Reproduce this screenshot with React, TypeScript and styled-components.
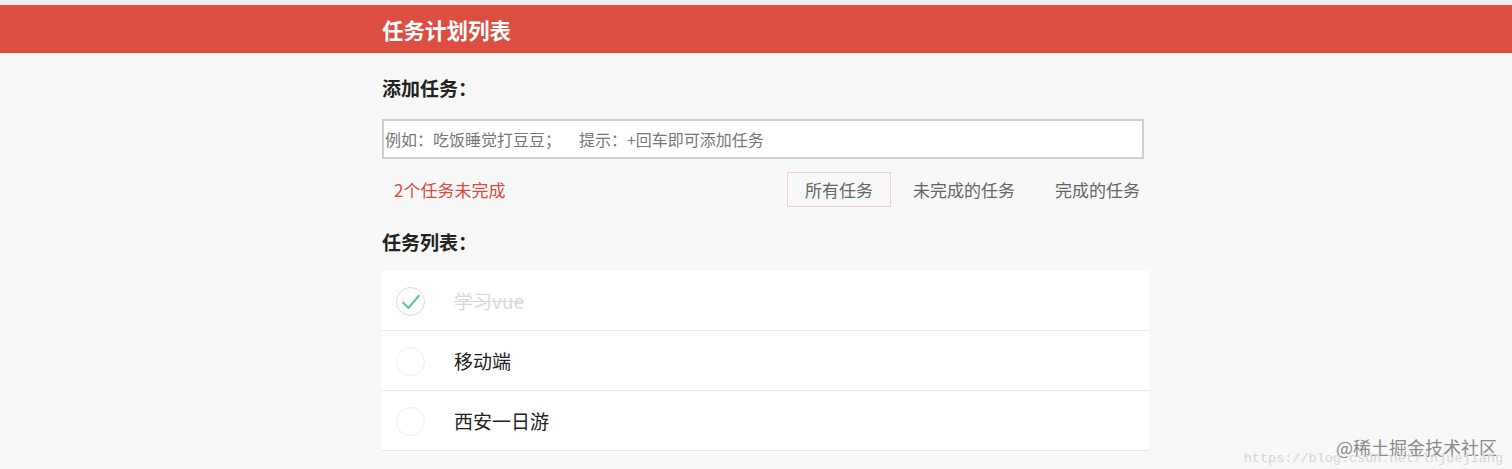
import styled, { createGlobalStyle } from "styled-components";

const GlobalStyle = createGlobalStyle`
  html, body {
    margin: 0;
    padding: 0;
    background: #f8f8f8;
  }
  body {
    font-family: "Noto Sans CJK SC", "Noto Sans", sans-serif;
  }
`;

const Page = styled.div`
  position: relative;
  height: 469px;
  overflow: hidden;
  border-top: 5px solid #eeeeee;
  background: #f8f8f8;
`;

const TopBar = styled.header`
  height: 48px;
  background: #dc4e41;
  display: flex;
  align-items: center;
  padding-left: 382px;

  h1 {
    margin: 0;
    font-size: 21.5px;
    font-weight: 700;
    color: #fff;
  }
`;

const Main = styled.main`
  width: 768px;
  margin-left: 382px;
  display: flex;
  flex-direction: column;
`;

const SectionTitle = styled.h2<{ $top: number }>`
  margin: ${(p) => p.$top}px 0 0 0;
  font-size: 19px;
  line-height: 24px;
  font-weight: 700;
  color: #222;
`;

const TaskInput = styled.input`
  box-sizing: border-box;
  width: 762px;
  height: 40px;
  margin-top: 19px;
  border: 2px solid #cfcfcf;
  background: #fff;
  padding: 0 1px;
  font-family: inherit;
  font-size: 16px;
  outline: none;

  &::placeholder {
    color: #777;
  }
`;

const FilterRow = styled.div`
  margin-top: 13px;
  height: 35px;
  display: flex;
  align-items: center;
  justify-content: space-between;
  margin-right: -8px;
`;

const Remaining = styled.span`
  padding-left: 12px;
  font-size: 17px;
  color: #d9493c;
`;

const Tabs = styled.div`
  display: flex;
  gap: 4px;
  height: 100%;
`;

const Tab = styled.button<{ $active?: boolean }>`
  height: 100%;
  box-sizing: border-box;
  padding: 0 17px;
  background: none;
  border: 1px solid ${(p) => (p.$active ? "#efd0d4" : "transparent")};
  font-family: inherit;
  font-size: 17px;
  color: #666;
  cursor: pointer;
`;

const List = styled.ul`
  list-style: none;
  margin: 17px 0 0 0;
  padding: 0;
  background: #fff;
`;

const Item = styled.li`
  height: 59px;
  display: flex;
  align-items: center;
  border-bottom: 1px solid #e8e8e8;
  padding-left: 14px;
`;

const Check = styled.span<{ $done?: boolean }>`
  width: 29px;
  height: 29px;
  box-sizing: border-box;
  border-radius: 50%;
  border: 1px solid ${(p) => (p.$done ? "#d5ddda" : "#ededed")};
  display: flex;
  align-items: center;
  justify-content: center;
  margin-top: 2px;
`;

const Label = styled.span<{ $done?: boolean }>`
  margin-left: 29px;
  font-size: 19px;
  color: ${(p) => (p.$done ? "#d9d9d9" : "#222")};
  text-decoration: ${(p) => (p.$done ? "line-through" : "none")};
`;

const Watermark = styled.div`
  position: absolute;
  right: 9px;
  bottom: 8px;
  display: flex;
  flex-direction: column;
  align-items: flex-end;

  .brand {
    font-size: 18px;
    color: #8a8a8a;
    line-height: 22px;
    margin-right: 6px;
  }
  .url {
    font-family: "Liberation Mono", monospace;
    font-size: 13.5px;
    line-height: 14px;
    color: #d6d6d6;
    margin-top: -6px;
  }
`;

const tasks = [
  { name: "学习vue", done: true },
  { name: "移动端", done: false },
  { name: "西安一日游", done: false },
];

const hint = "例如：吃饭睡觉打豆豆；\u00a0\u00a0\u00a0\u00a0\u00a0提示：+回车即可添加任务";

export default function App() {
  return (
    <Page>
      <GlobalStyle />
      <TopBar>
        <h1>任务计划列表</h1>
      </TopBar>
      <Main>
        <SectionTitle $top={23}>添加任务：</SectionTitle>
        <TaskInput placeholder={hint} />
        <FilterRow>
          <Remaining>2个任务未完成</Remaining>
          <Tabs>
            <Tab $active>所有任务</Tab>
            <Tab>未完成的任务</Tab>
            <Tab>完成的任务</Tab>
          </Tabs>
        </FilterRow>
        <SectionTitle $top={23}>任务列表：</SectionTitle>
        <List>
          {tasks.map((t) => (
            <Item key={t.name}>
              <Check $done={t.done}>
                {t.done && (
                  <svg width="22" height="22" viewBox="0 0 22 22">
                    <path
                      d="M3 11.5 L8.5 17 L19 4.5"
                      fill="none"
                      stroke="#5dc2af"
                      strokeWidth="2"
                      strokeLinecap="round"
                      strokeLinejoin="round"
                    />
                  </svg>
                )}
              </Check>
              <Label $done={t.done}>{t.name}</Label>
            </Item>
          ))}
        </List>
      </Main>
      <Watermark>
        <span className="brand">@稀土掘金技术社区</span>
        <span className="url">https://blog.csdn.net/lnjuejiang</span>
      </Watermark>
    </Page>
  );
}
